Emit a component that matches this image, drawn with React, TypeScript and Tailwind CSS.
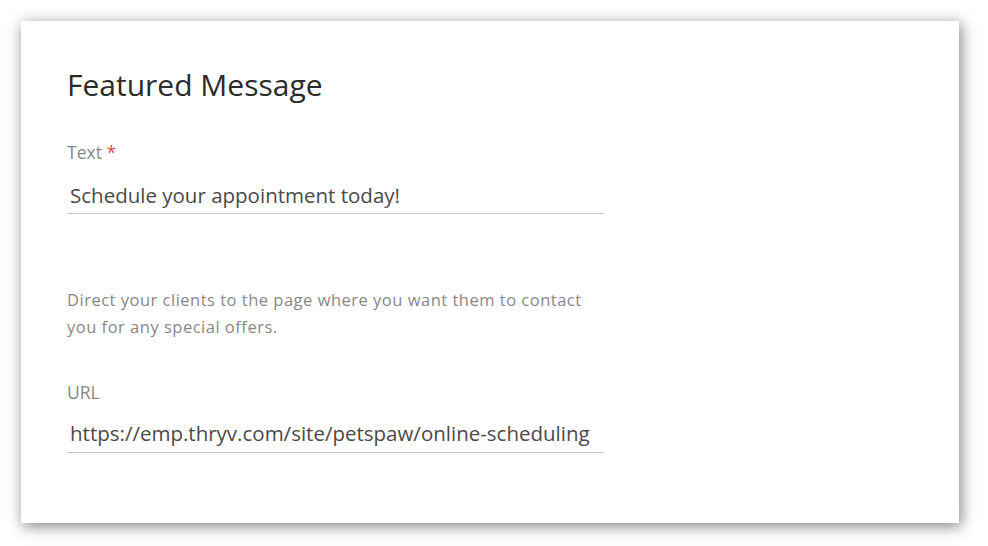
export default function App() {
    return (
        <div className="h-[546px] w-[988px] bg-white pl-[21px] pt-[21px]" style={{ fontFamily: '"Open Sans", sans-serif' }}>
            <div className="h-[502px] w-[938px] bg-white pl-[46px] pt-[45px] shadow-[2px_3px_14px_rgba(0,0,0,0.5)]">
                {/* Title */}
                <h1 className="text-[30px] leading-[38px] text-[#2b2b2b]">Featured Message</h1>

                {/* Text field */}
                <div className="mt-[36px] w-[537px]">
                    <label className="block text-[17.5px] leading-[24px] text-[#888]">
                        Text <span className="text-[#e04848]">*</span>
                    </label>
                    <div className="mt-[17px] border-b border-[#c4c4c4] pb-[4px] pl-[3px] text-[20.5px] leading-[28px] text-[#4a4a4a]">
                        Schedule your appointment today!
                    </div>
                </div>

                {/* Help text */}
                <p className="mt-[72px] w-[520px] text-[16.5px] leading-[27px] tracking-[0.5px] text-[#888]">
                    Direct your clients to the page where you want them to contact you for any special offers.
                </p>

                {/* URL field */}
                <div className="mt-[40px] w-[537px]">
                    <label className="block text-[17.5px] leading-[24px] text-[#888]">URL</label>
                    <div className="mt-[15px] border-b border-[#c4c4c4] pb-[5px] pl-[3px] text-[20.5px] leading-[28px] text-[#4a4a4a]">
                        https://emp.thryv.com/site/petspaw/online-scheduling
                    </div>
                </div>
            </div>
        </div>
    )
}
